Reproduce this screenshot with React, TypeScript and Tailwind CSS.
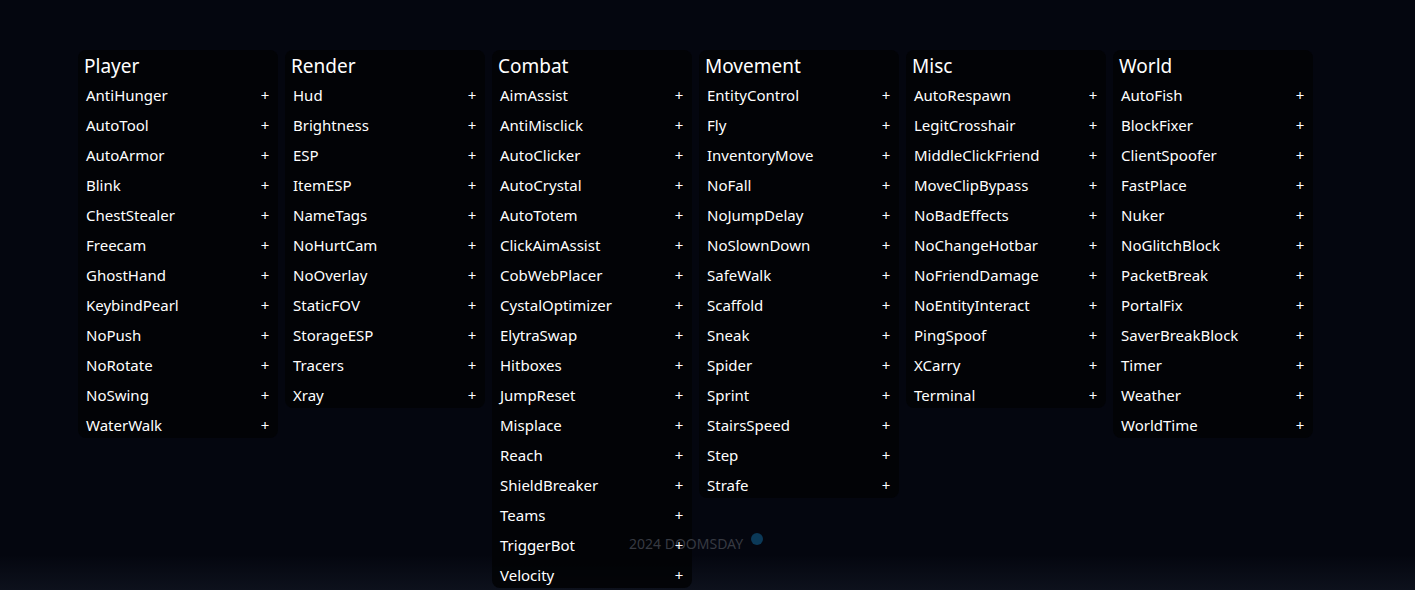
import React from "react";

const panels: { title: string; items: string[] }[] = [
  {
    title: "Player",
    items: ["AntiHunger", "AutoTool", "AutoArmor", "Blink", "ChestStealer", "Freecam", "GhostHand", "KeybindPearl", "NoPush", "NoRotate", "NoSwing", "WaterWalk"],
  },
  {
    title: "Render",
    items: ["Hud", "Brightness", "ESP", "ItemESP", "NameTags", "NoHurtCam", "NoOverlay", "StaticFOV", "StorageESP", "Tracers", "Xray"],
  },
  {
    title: "Combat",
    items: ["AimAssist", "AntiMisclick", "AutoClicker", "AutoCrystal", "AutoTotem", "ClickAimAssist", "CobWebPlacer", "CystalOptimizer", "ElytraSwap", "Hitboxes", "JumpReset", "Misplace", "Reach", "ShieldBreaker", "Teams", "TriggerBot", "Velocity"],
  },
  {
    title: "Movement",
    items: ["EntityControl", "Fly", "InventoryMove", "NoFall", "NoJumpDelay", "NoSlownDown", "SafeWalk", "Scaffold", "Sneak", "Spider", "Sprint", "StairsSpeed", "Step", "Strafe"],
  },
  {
    title: "Misc",
    items: ["AutoRespawn", "LegitCrosshair", "MiddleClickFriend", "MoveClipBypass", "NoBadEffects", "NoChangeHotbar", "NoFriendDamage", "NoEntityInteract", "PingSpoof", "XCarry", "Terminal"],
  },
  {
    title: "World",
    items: ["AutoFish", "BlockFixer", "ClientSpoofer", "FastPlace", "Nuker", "NoGlitchBlock", "PacketBreak", "PortalFix", "SaverBreakBlock", "Timer", "Weather", "WorldTime"],
  },
];

export default function App() {
  return (
    <div
      className="relative h-[590px] w-[1415px] overflow-hidden bg-[linear-gradient(to_bottom,#04060f_0%,#04060f_94%,#0d111c_100%)] text-white"
      style={{ fontFamily: '"Noto Sans", "Open Sans", sans-serif' }}
    >
      <div className="absolute left-[629px] top-[533px] flex items-center gap-[8px]">
        <span className="text-[14px] leading-[20px] text-[#373a42]">2024 DOOMSDAY</span>
        <span className="mb-[10px] h-[12px] w-[12px] rounded-full bg-[#0b3958]" />
      </div>
      <div className="flex items-start gap-[7px] pl-[78px] pt-[50px]">
        {panels.map((p) => (
          <div key={p.title} className="w-[200px] shrink-0 rounded-[8px] bg-[#020306]/90">
            <div className="h-[28px] pl-[6px] text-[19px] leading-[32px]">{p.title}</div>
            {p.items.map((it) => (
              <div key={it} className="relative flex h-[30px] items-center justify-between pl-[8px] pr-[7px] pt-[4px] text-[15px]">
                <span>{it}</span>
                <span className="w-[12px] text-center text-[15px]">+</span>
              </div>
            ))}
          </div>
        ))}
      </div>
    </div>
  );
}
